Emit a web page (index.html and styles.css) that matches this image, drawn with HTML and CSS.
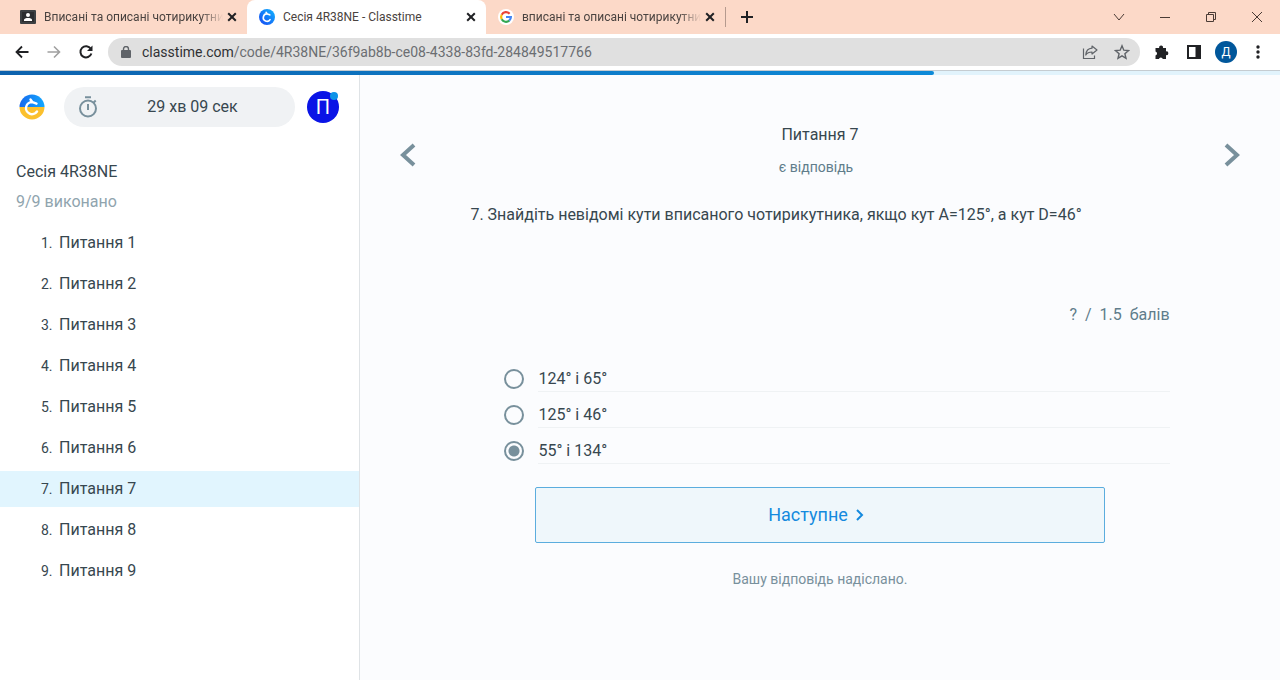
FILE: index.html
```html
<!DOCTYPE html>
<html lang="uk">
<head>
<meta charset="utf-8">
<title>Сесія 4R38NE - Classtime</title>
<link rel="stylesheet" href="styles.css">
</head>
<body>
<div class="window">
  <header class="tabstrip">
    <div class="tab">
      <svg class="favicon" viewBox="0 0 16 16"><rect y="1" width="16" height="14" rx="1" fill="#3c4043"/><rect x="2" y="3" width="12" height="10" fill="#2b2d30"/><circle cx="8" cy="6" r="2" fill="#fff"/><path d="M4 12V11C4 9.500 6 9 8 9s4 .5 4 2v1z" fill="#fff"/></svg>
      <a class="tab-title faded" href="#">Вписані та описані чотирикутни</a>
      <button class="tab-close" aria-label="Закрити вкладку"><svg viewBox="0 0 10 10"><path d="M1.200 1.200l7.600 7.600M8.800 1.200L1.200 8.800"/></svg></button>
    </div>
    <div class="tab tab-active">
      <svg class="favicon" viewBox="0 0 26 26"><defs><linearGradient id="blue" x1="0" y1="1" x2="1" y2="0"><stop stop-color="#1746f2"/><stop offset="1" stop-color="#10b6ff"/></linearGradient></defs><circle cx="13" cy="13" r="13" fill="url(#blue)"/><path d="M18 17.200A6 6 0 1 1 13.500 8L17.500 9.500M13.500 8l-2-2.600" fill="none" stroke="#fff" stroke-width="2.600" stroke-linecap="round" stroke-linejoin="round"/></svg>
      <a class="tab-title" href="#">Сесія 4R38NE - Classtime</a>
      <button class="tab-close" aria-label="Закрити вкладку"><svg viewBox="0 0 10 10"><path d="M1.200 1.200l7.600 7.600M8.800 1.200L1.200 8.800"/></svg></button>
    </div>
    <div class="tab">
      <svg class="favicon" viewBox="0 0 16 16"><circle cx="8" cy="8" r="8" fill="#fff"/><g fill="none" stroke-width="2.200"><path d="M11.600 4.700A4.900 4.900 0 0 0 3.700 5.700" stroke="#ea4335"/><path d="M3.700 5.700a4.900 4.900 0 0 0 0 4.600" stroke="#fbbc05"/><path d="M3.700 10.300a4.900 4.900 0 0 0 7.500 1.300" stroke="#34a853"/><path d="M11.200 11.600A4.900 4.900 0 0 0 12.900 8H8" stroke="#4285f4"/></g></svg>
      <a class="tab-title faded" href="#">вписані та описані чотирикутни</a>
      <button class="tab-close" aria-label="Закрити вкладку"><svg viewBox="0 0 10 10"><path d="M1.200 1.200l7.600 7.600M8.800 1.200L1.200 8.800"/></svg></button>
    </div>
    <button class="new-tab" aria-label="Нова вкладка"><svg viewBox="0 0 12 12"><path d="M6 0v12M0 6h12"/></svg></button>
    <div class="window-controls">
      <button aria-label="Пошук вкладок"><svg viewBox="0 0 12 12"><path d="M1 3l5 6 5-6"/></svg></button>
      <button aria-label="Згорнути"><svg viewBox="0 0 12 12"><path d="M1 6.500h10"/></svg></button>
      <button aria-label="Відновити"><svg viewBox="0 0 12 12"><path d="M1.500 3.500h7v7h-7zM3.500 3.500v-2h7v7h-2"/></svg></button>
      <button aria-label="Закрити"><svg viewBox="0 0 12 12"><path d="M1 1l10 10M11 1L1 11"/></svg></button>
    </div>
  </header>

  <div class="toolbar">
    <button class="tool" aria-label="Назад"><svg viewBox="0 0 16 16"><path d="M14.500 8H2.500M8 2.500L2.500 8 8 13.500" fill="none" stroke="#202124" stroke-width="1.800"/></svg></button>
    <button class="tool" aria-label="Вперед"><svg viewBox="0 0 16 16"><path d="M1.500 8h12M8 2.500L13.500 8 8 13.500" fill="none" stroke="#a0a0a0" stroke-width="1.600"/></svg></button>
    <button class="tool" aria-label="Оновити"><svg viewBox="0 0 16 16"><path d="M12.800 4.800A5.600 5.600 0 1 0 13.400 9.500" fill="none" stroke="#202124" stroke-width="2"/><path d="M14.500 1.500v5.500H9z" fill="#202124"/></svg></button>
    <div class="omnibox">
      <svg class="lock" viewBox="0 0 10 13"><rect y="4" width="10" height="8" rx="1" fill="#5f6368"/><path d="M2.500 4.500V3a2.500 2.500 0 0 1 5 0v1.500" fill="none" stroke="#5f6368" stroke-width="1.400"/></svg>
      <a class="url" href="#"><span class="host">classtime.com</span>/code/4R38NE/36f9ab8b-ce08-4338-83fd-284849517766</a>
      <button class="tool" aria-label="Поділитися"><svg viewBox="0 0 16 16" fill="none" stroke="#5f6368" stroke-width="1.200"><path d="M1.500 4.500v10h11v-3"/><path d="M10 2l5 4-5 4V8C7 8 5 9 3.800 11 4 7.500 6 4.500 10 4.200z" stroke-linejoin="round"/></svg></button>
      <button class="tool" aria-label="Додати закладку"><svg viewBox="0 0 16 16"><path d="M8 1.800l1.800 4.400 4.700.4-3.600 3.100 1.100 4.600-4-2.500-4 2.500 1.100-4.600L1.500 6.600l4.700-.4z" fill="none" stroke="#5f6368" stroke-width="1.400"/></svg></button>
    </div>
    <div class="extensions">
      <button class="tool" aria-label="Розширення"><svg viewBox="0 0 16 16"><path d="M2 4h3.200a2 2 0 1 1 3.800 0H12v3.400a1.900 1.900 0 1 1 0 3.700V15H8.800a2 2 0 0 0-3.900 0H1.500v-3.500a2 2 0 0 0 0-3.900V4z" fill="#202124"/></svg></button>
      <button class="tool" aria-label="Бічна панель"><svg viewBox="0 0 16 16"><path d="M1 1h14v14H1zM3 3v10h6.500V3z" fill="#202124" fill-rule="evenodd"/></svg></button>
      <button class="profile">Д</button>
      <button class="tool" aria-label="Меню"><svg viewBox="0 0 16 16" fill="#202124"><circle cx="8" cy="3" r="1.700"/><circle cx="8" cy="8" r="1.700"/><circle cx="8" cy="13" r="1.700"/></svg></button>
    </div>
  </div>

  <div class="progress"><div class="progress-bar" style="width:73%"></div></div>

  <div class="page">
    <aside class="sidebar">
      <div class="account">
        <svg class="logo" viewBox="0 0 26 26"><defs><linearGradient id="sky"><stop stop-color="#1769ed"/><stop offset="1" stop-color="#12a8ff"/></linearGradient></defs><path d="M.5 13a12.500 12.500 0 0 1 25 0z" fill="url(#sky)"/><path d="M.5 13a12.500 12.500 0 0 0 25 0z" fill="#fbc02d"/><path d="M18 17.500A6 6 0 1 1 13.500 8.200L17.500 9.700M13.500 8.200l-2-2.700" fill="none" stroke="#fff" stroke-width="2.400" stroke-linecap="round" stroke-linejoin="round"/></svg>
        <div class="timer">
          <svg class="stopwatch" viewBox="0 0 20 22" fill="none" stroke="#78909c" stroke-width="2"><circle cx="10" cy="12.500" r="8"/><path d="M7 1.200h6M10 8v6M15.500 6.700l2.200-2.200"/></svg>
          <span class="time">29 хв 09 сек</span>
        </div>
        <button class="avatar">П<span class="badge"></span></button>
      </div>
      <h1 class="session">Сесія 4R38NE</h1>
      <p class="done">9/9 виконано</p>
      <nav class="questions">
        <a href="#"><span class="num">1.</span>Питання 1</a>
        <a href="#"><span class="num">2.</span>Питання 2</a>
        <a href="#"><span class="num">3.</span>Питання 3</a>
        <a href="#"><span class="num">4.</span>Питання 4</a>
        <a href="#"><span class="num">5.</span>Питання 5</a>
        <a href="#"><span class="num">6.</span>Питання 6</a>
        <a href="#" class="current"><span class="num">7.</span>Питання 7</a>
        <a href="#"><span class="num">8.</span>Питання 8</a>
        <a href="#"><span class="num">9.</span>Питання 9</a>
      </nav>
    </aside>

    <main class="content">
      <div class="question-nav">
        <button class="arrow" aria-label="Попереднє питання"><svg viewBox="0 0 16 24"><path d="M14 2L3 12l11 10"/></svg></button>
        <div class="heading">
          <h2>Питання 7</h2>
          <p class="status">є відповідь</p>
        </div>
        <button class="arrow" aria-label="Наступне питання"><svg viewBox="0 0 16 24"><path d="M2 2l11 10L2 22"/></svg></button>
      </div>
      <form class="question">
        <p class="prompt">7. Знайдіть невідомі кути вписаного чотирикутника, якщо кут A=125°, а кут D=46°</p>
        <p class="points"><span>?</span><span>/</span><span>1.5</span><span>балів</span></p>
        <div class="options">
          <label><input type="radio" name="answer"><span>124° і 65°</span></label>
          <label><input type="radio" name="answer"><span>125° і 46°</span></label>
          <label><input type="radio" name="answer" checked><span>55° і 134°</span></label>
        </div>
        <button class="next" type="button">Наступне<svg viewBox="0 0 8 12"><path d="M1 1l5 5-5 5"/></svg></button>
        <p class="sent">Вашу відповідь надіслано.</p>
      </form>
    </main>
  </div>
</div>
</body>
</html>
```
FILE: styles.css
```css
* { box-sizing: border-box; }
body { margin: 0; background: #fff; color: #37474f; font: 16px/24px Roboto, sans-serif; }
h1, h2, p { margin: 0; font-size: 16px; font-weight: 400; }
button { border: 0; padding: 0; background: none; font: inherit; color: inherit; display: flex; align-items: center; justify-content: center; }
a { color: inherit; text-decoration: none; }
svg { display: block; flex: none; }

.window { min-height: 100vh; display: flex; flex-direction: column; }

.tabstrip { display: flex; align-items: center; height: 34px; background: #fcd9c8; font: 12px/16px Roboto, sans-serif; color: #4a4340; }
.tab { display: flex; align-items: center; width: 239px; height: 34px; padding: 0 10px 0 12px; }
.tab:first-child { width: 247px; padding-left: 20px; }
.tab-active { background: #fff; border-radius: 8px 8px 0 0; }
.favicon { width: 16px; height: 16px; margin-right: 8px; }
.tab-title { flex: 1; min-width: 0; white-space: nowrap; }
.faded { mask-image: linear-gradient(to right, #000 88%, transparent); }
.tab-close { width: 10px; height: 10px; margin-left: 4px; }
.tab-close svg { width: 10px; height: 10px; stroke: #202124; stroke-width: 2; }
.new-tab { height: 20px; padding-left: 15px; border-left: 1px solid #b59a8e; }
.new-tab svg { width: 12px; height: 12px; stroke: #202124; stroke-width: 2; }
.window-controls { display: flex; align-items: center; margin-left: auto; height: 30px; }
.window-controls button { width: 46px; height: 30px; }
.window-controls svg { width: 12px; height: 12px; fill: none; stroke: #4a3b35; stroke-width: 1; }

.toolbar { display: flex; align-items: center; gap: 16px; height: 37px; padding: 0 14px; border-bottom: 1px solid #c5ccd1; }
.tool, .tool svg { width: 16px; height: 16px; }
.omnibox { flex: 1; display: flex; align-items: center; gap: 16px; height: 28px; margin-left: -2px; padding: 0 10px 0 13px; border-radius: 14px; background: #e0e0e0; }
.lock { width: 10px; height: 13px; margin-right: -5px; }
.url { flex: 1; font-size: 14px; line-height: 20px; color: #6b6e72; }
.host { color: #303134; }
.extensions { display: flex; align-items: center; gap: 13px; margin-left: -2px; }
.extensions .tool:first-child { margin-right: 3px; }
.profile { width: 22px; height: 22px; border-radius: 50%; background: #01579b; color: #fff; font-size: 12px; }

.progress { height: 4px; background: #e1f3fc; }
.progress-bar { height: 4px; background: linear-gradient(to right, #0d62ad, #0d8ad8); border-radius: 0 2px 2px 0; }

.page { flex: 1; display: flex; }
.sidebar { width: 360px; border-right: 1px solid #dfe3e6; }
.account { display: flex; align-items: center; gap: 12px; padding: 12px 20px; }
.logo { width: 26px; height: 26px; margin: 0 7px 0 -1px; }
.timer { flex: 1; display: flex; align-items: center; height: 40px; padding: 0 8px 0 14px; border-radius: 20px; background: #f0f2f4; }
.stopwatch { width: 20px; height: 22px; }
.time { flex: 1; text-align: center; }
.avatar { position: relative; width: 32px; height: 32px; border-radius: 50%; background: #0a14e6; color: #fff; font-size: 20px; }
.badge { position: absolute; top: 1px; right: 1px; width: 8px; height: 8px; border-radius: 50%; background: #0d93e8; }
.session { margin: 21px 16px 0; }
.done { margin: 6px 16px 0; color: #90a4ae; }
.questions { display: grid; gap: 5px; margin-top: 11px; }
.questions a { display: flex; align-items: center; height: 36px; padding-left: 41px; }
.num { width: 18px; font-size: 14px; }
.current { background: #e1f5fe; }

.content { flex: 1; background: #fbfcfe; }
.question-nav { display: flex; align-items: flex-end; padding: 48px 40px 0; }
.heading { flex: 1; padding-right: 8px; text-align: center; }
.heading h2 { padding-left: 8px; }
.status { margin-top: 8px; font-size: 14px; color: #607d8b; }
.arrow { padding-bottom: 12px; }
.arrow svg { width: 16px; height: 24px; fill: none; stroke: #78909c; stroke-width: 4; }
.question { width: 76%; margin: 0 auto; display: flex; flex-direction: column; }
.prompt { margin-top: 24px; }
.points { display: flex; justify-content: flex-end; gap: 8px; margin-top: 76px; color: #607d8b; }
.options { margin: 34px 0 18px 34px; }
.options label { display: flex; align-items: center; gap: 14px; height: 36px; }
.options input { appearance: none; width: 20px; height: 20px; margin: 0; border: 2px solid #78909c; border-radius: 50%; }
.options input:checked { background: radial-gradient(circle, #78909c 5px, transparent 6px); }
.options span { flex: 1; padding-top: 1px; border-bottom: 1px solid #eff2f4; }
.next { align-self: center; width: 570px; max-width: 100%; height: 56px; gap: 8px; padding-right: 8px; border: 1px solid #5badde; border-radius: 2px; background: #eff7fb; color: #148ade; font-size: 18px; }
.next svg { width: 8px; height: 12px; fill: none; stroke: #148ade; stroke-width: 2; }
.sent { margin-top: 24px; text-align: center; font-size: 14px; color: #78909c; }
```
